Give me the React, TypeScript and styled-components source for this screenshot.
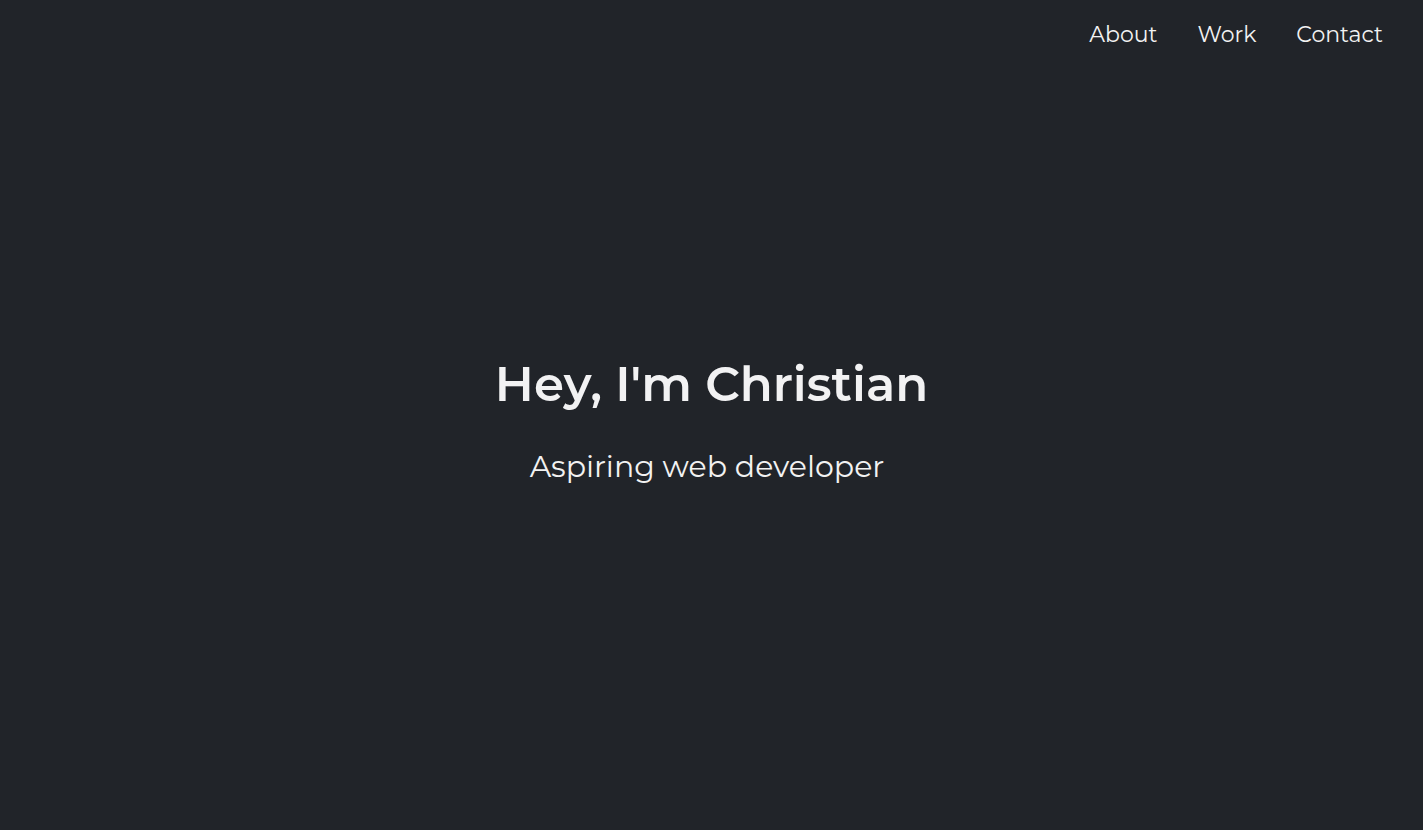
import React from "react";
import styled, { createGlobalStyle } from "styled-components";

const Global = createGlobalStyle`
  html, body {
    margin: 0;
    padding: 0;
    background: #212429;
  }
  body {
    font-family: Montserrat, Inter, "DejaVu Sans", sans-serif;
    color: #f2f2f2;
  }
  * { box-sizing: border-box; }
`;

const Page = styled.div`
  height: 830px;
  display: flex;
  flex-direction: column;
  background: #212429;
`;

const Nav = styled.nav`
  display: flex;
  justify-content: flex-end;
  align-items: center;
  gap: 40px;
  height: 68px;
  padding: 0 40px 0 0;
`;

const NavLink = styled.a`
  font-size: 22px;
  font-weight: 400;
  color: #f2f2f2;
  text-decoration: none;
`;

const Hero = styled.main`
  flex: 1;
  display: flex;
  flex-direction: column;
  align-items: center;
  justify-content: center;
  padding-bottom: 58px;
`;

const Title = styled.h1`
  margin: 0;
  font-size: 48.2px;
  font-weight: 600;
  line-height: 1.2;
  color: #f2f2f3;
`;

const Subtitle = styled.p`
  margin: 36px 0 0;
  padding-right: 9px;
  font-size: 30px;
  font-weight: 400;
  line-height: 1.2;
  color: #f2f2f2;
`;

export default function App() {
  return (
    <>
      <Global />
      <Page>
        <Nav>
          <NavLink href="#about">About</NavLink>
          <NavLink href="#work">Work</NavLink>
          <NavLink href="#contact">Contact</NavLink>
        </Nav>
        <Hero>
          <Title>Hey, I'm Christian</Title>
          <Subtitle>Aspiring web developer</Subtitle>
        </Hero>
      </Page>
    </>
  );
}
